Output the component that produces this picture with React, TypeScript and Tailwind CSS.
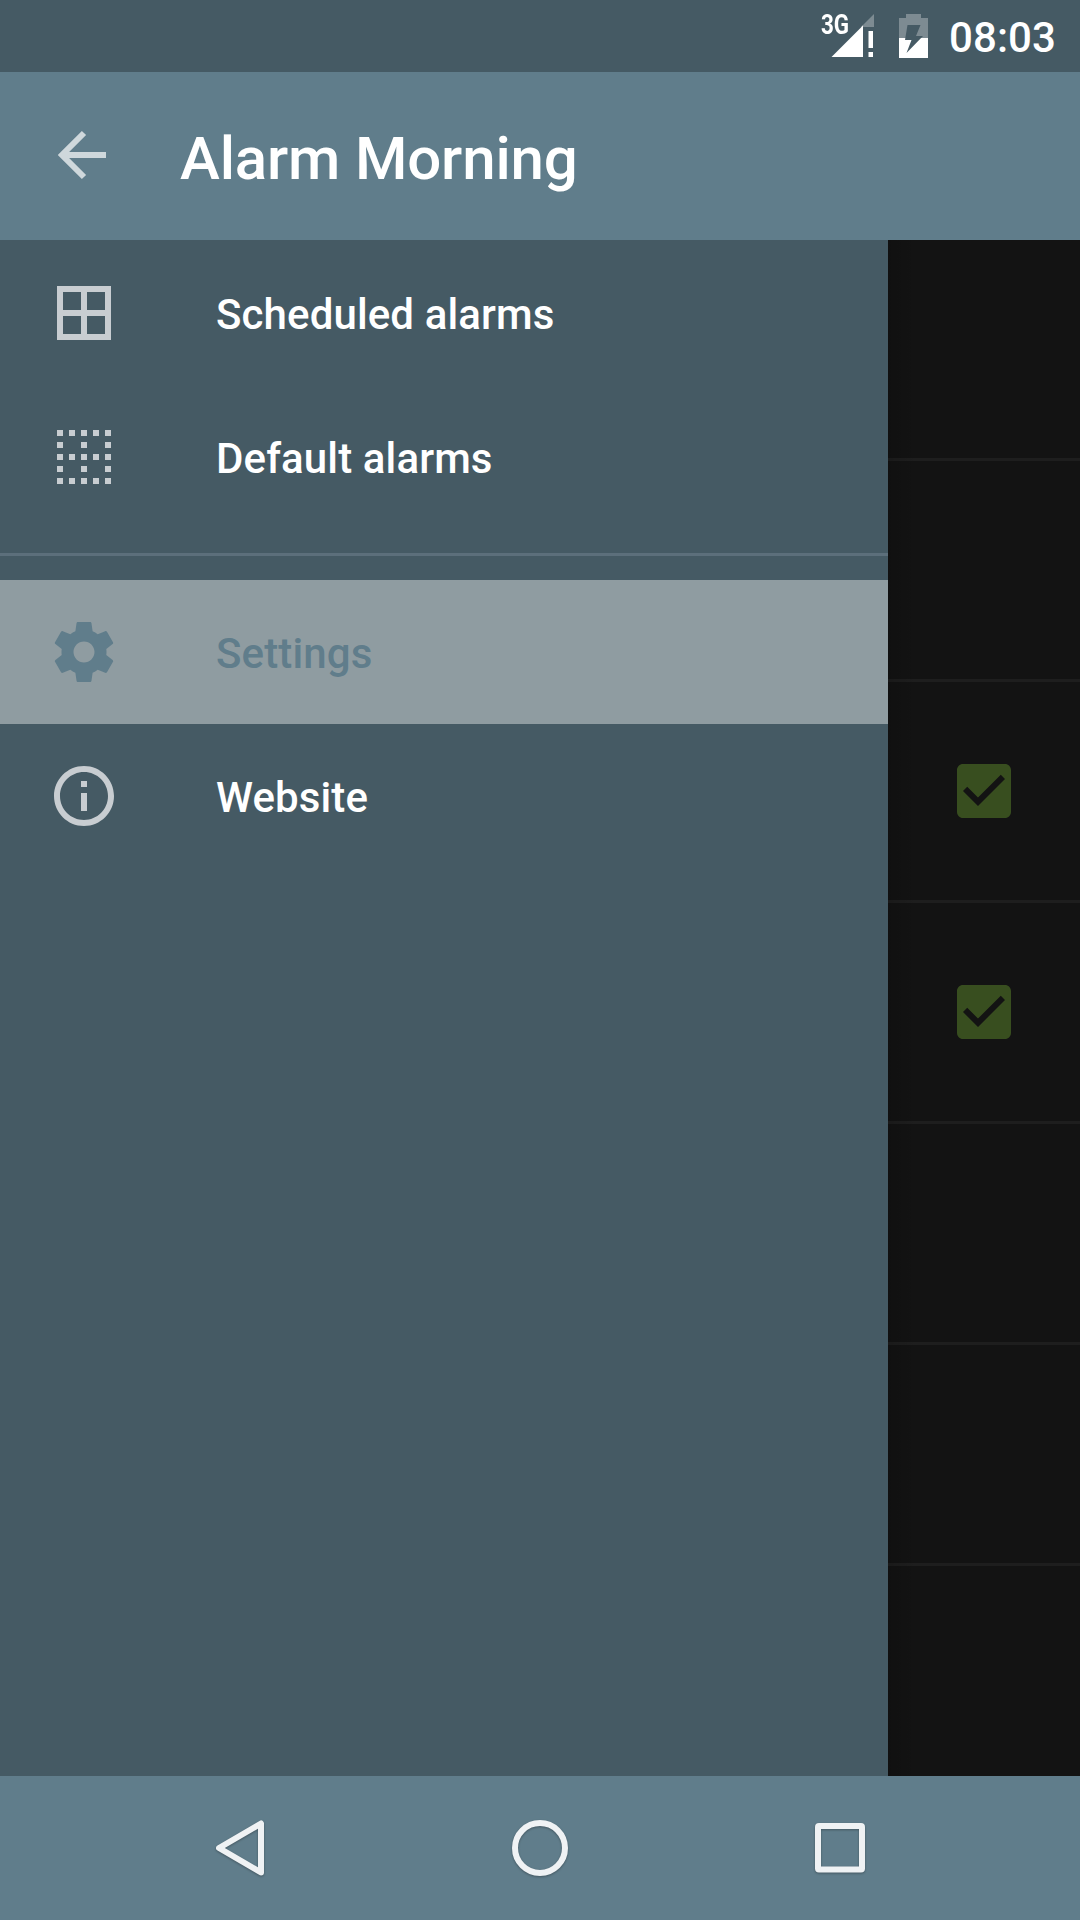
import React from "react";

const Icon = ({ d }: { d: string }) => (
  <svg viewBox="0 0 24 24" className="size-[72px] shrink-0" fill="currentColor">
    <path d={d} />
  </svg>
);

const ICONS = {
  borderAll: "M3 3v18h18V3H3zm8 16H5v-6h6v6zm0-8H5V5h6v6zm8 8h-6v-6h6v6zm0-8h-6V5h6v6z",
  borderClear:
    "M7 5h2V3H7v2zm0 8h2v-2H7v2zm0 8h2v-2H7v2zm4-4h2v-2h-2v2zm0 4h2v-2h-2v2zm-8 0h2v-2H3v2zm0-4h2v-2H3v2zm0-4h2v-2H3v2zm0-4h2V7H3v2zm0-4h2V3H3v2zm8 8h2v-2h-2v2zm8 4h2v-2h-2v2zm0-4h2v-2h-2v2zm0 8h2v-2h-2v2zm0-12h2V7h-2v2zm-8 0h2V7h-2v2zm8-6v2h2V3h-2zm-8 2h2V3h-2v2zm4 16h2v-2h-2v2zm0-8h2v-2h-2v2zm0-8h2V3h-2v2z",
  settings:
    "M19.43 12.98c.04-.32.07-.64.07-.98s-.03-.66-.07-.98l2.11-1.65c.19-.15.24-.42.12-.64l-2-3.46c-.12-.22-.39-.3-.61-.22l-2.49 1c-.52-.4-1.08-.73-1.69-.98l-.38-2.65C14.46 2.18 14.25 2 14 2h-4c-.25 0-.46.18-.49.42l-.38 2.65c-.61.25-1.17.59-1.69.98l-2.49-1c-.23-.09-.49 0-.61.22l-2 3.46c-.13.22-.07.49.12.64l2.11 1.65c-.04.32-.07.65-.07.98s.03.66.07.98l-2.11 1.65c-.19.15-.24.42-.12.64l2 3.46c.12.22.39.3.61.22l2.49-1c.52.4 1.08.73 1.69.98l.38 2.65c.03.24.24.42.49.42h4c.25 0 .46-.18.49-.42l.38-2.65c.61-.25 1.17-.59 1.69-.98l2.49 1c.23.09.49 0 .61-.22l2-3.46c.12-.22.07-.49-.12-.64l-2.11-1.65zM12 15.5c-1.93 0-3.5-1.57-3.5-3.5s1.57-3.5 3.5-3.5 3.5 1.57 3.5 3.5-1.57 3.5-3.5 3.5z",
  info: "M11 17h2v-6h-2v6zm1-15C6.48 2 2 6.48 2 12s4.48 10 10 10 10-4.48 10-10S17.52 2 12 2zm0 18c-4.41 0-8-3.59-8-8s3.59-8 8-8 8 3.59 8 8-3.59 8-8 8zM11 9h2V7h-2v2z",
};

const DrawerItem = ({ icon, label, active = false }: { icon: string; label: string; active?: boolean }) => (
  <div className={`flex h-36 items-center pl-12 ${active ? "bg-[#8f9ca1] text-[#607d8b]" : "text-[#c8cdd1]"}`}>
    <Icon d={icon} />
    <span
      className={`ml-24 pt-[3px] text-[42px] leading-none font-medium tracking-[0.12px] ${active ? "" : "text-white"}`}
    >
      {label}
    </span>
  </div>
);

const AlarmRow = ({ checked }: { checked: boolean }) => (
  <div className="flex h-[221px] shrink-0 items-center justify-end border-b-3 border-[#1e1e1e] pr-[60px]">
    {checked && (
      <svg viewBox="3 3 18 18" className="size-[72px] p-[9px]" fill="#384e1f">
        <path d="M19 3H5c-1.11 0-2 .9-2 2v14c0 1.1.89 2 2 2h14c1.11 0 2-.9 2-2V5c0-1.1-.89-2-2-2zm-9 14l-5-5 1.41-1.41L10 14.17l7.59-7.59L19 8l-9 9z" />
      </svg>
    )}
  </div>
);

export default function App() {
  return (
    <div className="flex h-[1920px] w-[1080px] flex-col overflow-hidden bg-[#131313] font-['Roboto',sans-serif]">
      <header className="flex h-[72px] shrink-0 items-start justify-end bg-[#455a64] text-white">
        <span className="mt-[12px] w-[27px] origin-left scale-x-[0.83] text-[27px] leading-[26px] font-bold">3G</span>
        <svg viewBox="0 0 60 60" className="-ml-[21px] mt-[6px] size-[60px]">
          <path d="M47 8v13H34z" fill="#7d8b92" />
          <path d="M36 19v32h-2V21z" fill="#7d8b92" />
          <path d="M4.500 51 36 19.500V51z" fill="#fff" />
          <path d="M41.500 25H46v17h-4.500zM41.500 46H46v5h-4.500z" fill="#fff" />
        </svg>
        <svg viewBox="0 0 29 44" className="ml-[12px] mt-[14px] h-[44px] w-[29px]">
          <path d="M7 0h15v4h7v20H0V4h7z" fill="#7d8b92" />
          <path d="M0 24h29v20H0z" fill="#fff" />
          <path d="M8.500 11h13L17 22h7L7.500 39l5-13H6z" fill="#455a64" />
        </svg>
        <span className="mr-[24px] ml-[21px] mt-[17px] text-[42px] leading-[42px] font-medium tracking-[0.1px]">
          08:03
        </span>
      </header>

      <div className="flex h-[168px] shrink-0 items-center bg-[#607d8b]">
        <svg viewBox="0 0 72 72" className="ml-12 size-[72px]" fill="none" stroke="#cfd8dc" strokeWidth="6">
          <path d="M58 35H14M36 13l-22 22 22 22" />
        </svg>
        <h1 className="ml-[60px] pt-[5px] text-[60px] leading-none font-medium tracking-[-0.15px] text-white">
          Alarm Morning
        </h1>
      </div>

      <main className="flex h-[1536px] shrink-0">
        <nav className="w-[888px] shrink-0 bg-[#455a64] pt-px">
          <DrawerItem icon={ICONS.borderAll} label="Scheduled alarms" />
          <DrawerItem icon={ICONS.borderClear} label="Default alarms" />
          <div className="my-6 h-[3px] bg-[#5c6f7b]" />
          <DrawerItem icon={ICONS.settings} label="Settings" active />
          <DrawerItem icon={ICONS.info} label="Website" />
        </nav>
        <section className="relative flex-1 overflow-hidden bg-[#131313]">
          {[false, false, true, true, false, false].map((checked, i) => (
            <AlarmRow key={i} checked={checked} />
          ))}
          <div className="absolute inset-y-0 left-0 w-7 bg-linear-to-r from-black/15 to-transparent" />
        </section>
      </main>

      <footer className="flex h-36 shrink-0 items-center justify-center gap-[228px] bg-[#607d8b]">
        {[
          <path key="back" d="M57 11.500v49L15 36z" />,
          <circle key="home" cx="36" cy="36" r="25" />,
          <rect key="recent" x="14" y="14" width="44" height="43.5" rx="1" />,
        ].map((shape, i) => (
          <svg
            key={i}
            viewBox="0 0 72 72"
            className="size-[72px] drop-shadow-[0_1px_1px_rgba(0,0,0,0.3)]"
            fill="none"
            stroke="#eff2f4"
            strokeWidth="6"
            strokeLinejoin="round"
          >
            {shape}
          </svg>
        ))}
      </footer>
    </div>
  );
}
